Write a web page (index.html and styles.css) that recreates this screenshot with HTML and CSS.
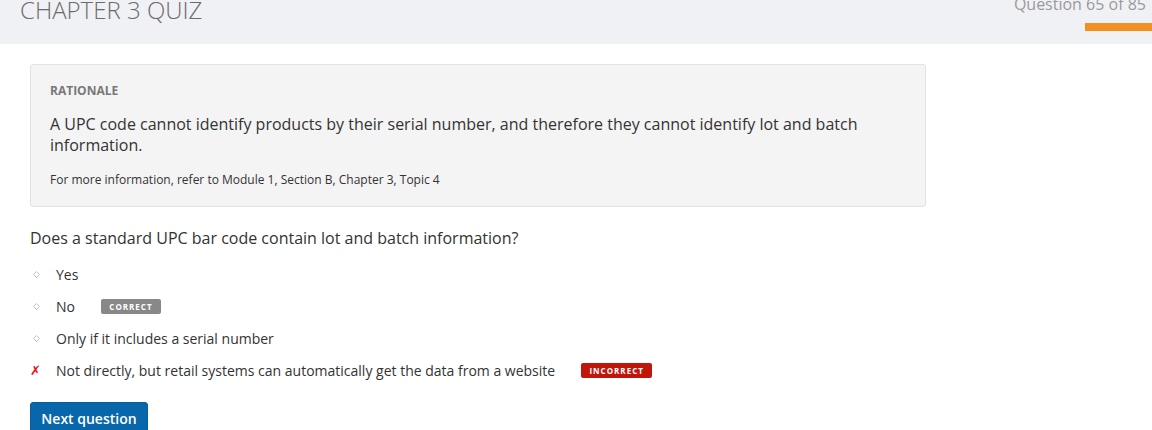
FILE: index.html
```html
<!DOCTYPE html>
<html>
<head>
<meta charset="utf-8">
<link rel="stylesheet" href="styles.css">
</head>
<body>
<header class="topbar">
  <h1 class="quiz-title">CHAPTER 3 QUIZ</h1>
  <div class="progress">
    <div class="progress-text">Question 65 of 85</div>
    <div class="progress-bar"></div>
  </div>
</header>
<main class="content">
  <section class="rationale">
    <div class="rationale-label">RATIONALE</div>
    <p class="rationale-text">A UPC code cannot identify products by their serial number, and therefore they cannot identify lot and batch information.</p>
    <p class="rationale-ref">For more information, refer to Module 1, Section B, Chapter 3, Topic 4</p>
  </section>
  <p class="question">Does a standard UPC bar code contain lot and batch information?</p>
  <ul class="answers">
    <li class="answer"><span class="marker"><svg width="7" height="7" viewBox="0 0 7 7"><path d="M3.5 0.5 L6.5 3.5 L3.5 6.5 L0.5 3.5 Z" fill="none" stroke="#c4c4c4" stroke-width="1"/></svg></span><span class="answer-text">Yes</span></li>
    <li class="answer"><span class="marker"><svg width="7" height="7" viewBox="0 0 7 7"><path d="M3.5 0.5 L6.5 3.5 L3.5 6.5 L0.5 3.5 Z" fill="none" stroke="#c4c4c4" stroke-width="1"/></svg></span><span class="answer-text">No</span><span class="badge badge-correct">CORRECT</span></li>
    <li class="answer"><span class="marker"><svg width="7" height="7" viewBox="0 0 7 7"><path d="M3.5 0.5 L6.5 3.5 L3.5 6.5 L0.5 3.5 Z" fill="none" stroke="#c4c4c4" stroke-width="1"/></svg></span><span class="answer-text">Only if it includes a serial number</span></li>
    <li class="answer"><span class="marker marker-wrong">✗</span><span class="answer-text">Not directly, but retail systems can automatically get the data from a website</span><span class="badge badge-incorrect">INCORRECT</span></li>
  </ul>
  <button class="next-btn">Next question</button>
</main>
</body>
</html>
```

FILE: styles.css
```css
* { box-sizing: border-box; }
html, body { margin: 0; padding: 0; }
body {
  font-family: "Open Sans", "Liberation Sans", sans-serif;
  color: #333;
  background: #fff;
  overflow: hidden;
}
.topbar {
  height: 44px;
  background: #f0f1f5;
  display: flex;
  justify-content: space-between;
  align-items: flex-start;
  padding-left: 20px;
  overflow: hidden;
}
.quiz-title {
  margin: -2px 0 0 0;
  font-size: 24px;
  line-height: 24px;
  font-weight: 300;
  color: #6b6b6b;
  letter-spacing: 0;
}
.progress {
  display: flex;
  flex-direction: column;
  align-items: flex-end;
}
.progress-text {
  margin-top: -4px;
  font-size: 16px;
  line-height: 16px;
  color: #9a9a9a;
  padding-right: 6px;
}
.progress-bar {
  margin-top: 11px;
  width: 67px;
  height: 8px;
  background: #f39020;
}
.content {
  padding: 20px 30px 0 30px;
}
.rationale {
  width: 896px;
  background: #f4f4f4;
  border: 1px solid #e2e2e2;
  border-radius: 3px;
  padding: 18px 19px 18px 19px;
}
.rationale-label {
  font-size: 12px;
  font-weight: 700;
  color: #787878;
  line-height: 16px;
}
.rationale-text {
  margin: 15px 0 0 0;
  font-size: 16px;
  line-height: 21px;
  color: #333;
}
.rationale-ref {
  margin: 16px 0 0 0;
  font-size: 12px;
  line-height: 16px;
  color: #333;
}
.question {
  margin: 20px 0 0 0;
  font-size: 16px;
  line-height: 22px;
  color: #333;
}
.answers {
  list-style: none;
  margin: 9px 0 0 0;
  padding: 0;
}
.answer {
  display: flex;
  align-items: center;
  height: 32px;
  font-size: 14px;
  color: #333;
}
.marker {
  width: 26px;
  display: flex;
  align-items: center;
  padding-left: 3px;
}
.marker-wrong {
  color: #e5101b;
  font-family: "DejaVu Sans", sans-serif;
  font-size: 13px;
  font-weight: 700;
  font-style: italic;
  padding-left: 0;
}
.badge {
  margin-left: 26px;
  font-size: 8px;
  font-weight: 700;
  letter-spacing: 1px;
  color: #fff;
  line-height: 15px;
  height: 15px;
  border-radius: 2px;
  text-align: center;
}
.badge-correct {
  width: 60px;
  background: #888;
}
.badge-incorrect {
  width: 71px;
  background: #c0160c;
}
.next-btn {
  margin-top: 16px;
  width: 118px;
  height: 34px;
  background: #0867ab;
  border: 1px solid #075d9b;
  border-radius: 3px;
  color: #fff;
  font-family: "Open Sans", "Liberation Sans", sans-serif;
  font-size: 14px;
  font-weight: 600;
  padding: 0 0 1px 0;
  text-align: center;
}
```
